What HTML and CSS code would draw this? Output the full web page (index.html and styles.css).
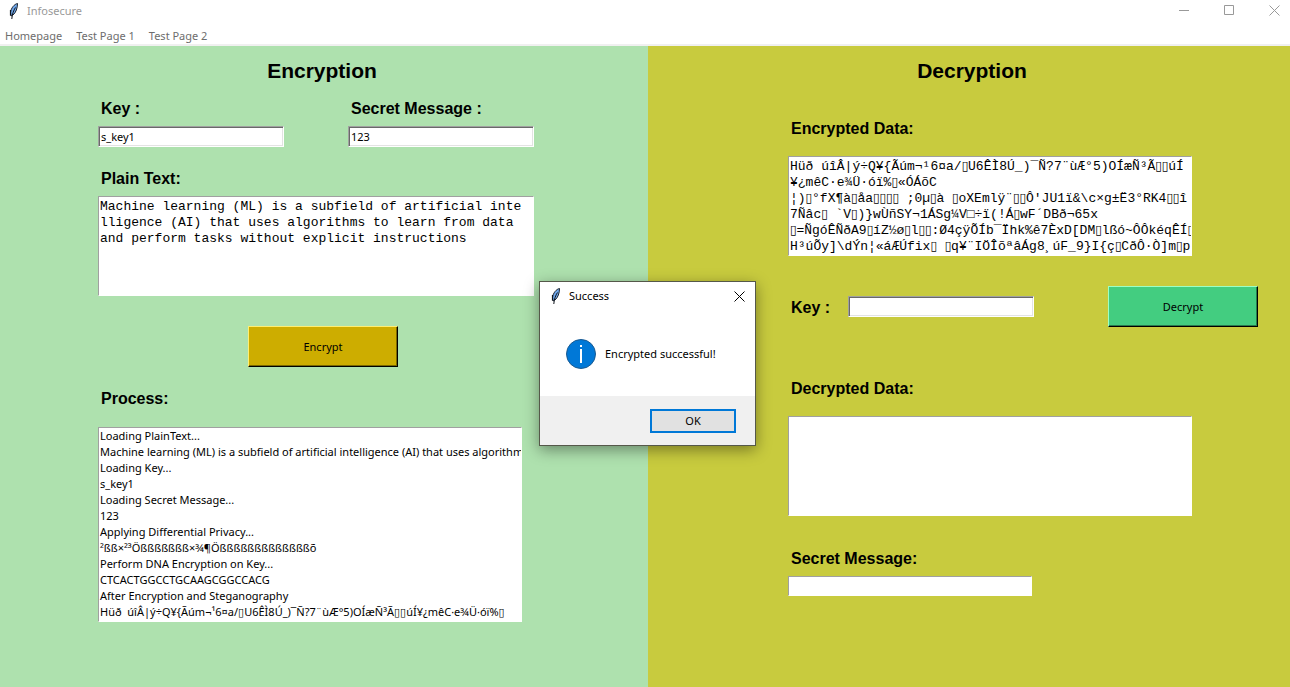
FILE: index.html
```
<!DOCTYPE html>
<html lang="en">
<head>
<meta charset="utf-8">
<title>Infosecure</title>
<link rel="stylesheet" href="styles.css">
</head>
<body>
<svg class="defs" aria-hidden="true">
  <symbol id="feather" viewBox="0 0 12 18">
    <path d="M9.500 1.500C6.500 2 3 6 2.500 10.500L3 14L5 13C8 10.500 9.500 6 9.500 1.500Z" fill="#6ea6ea" stroke="#1b222c" stroke-width="1"/>
    <path d="M7.500 5.500C5.500 8.500 4.200 12 3.800 17" fill="none" stroke="#10151c" stroke-width="1"/>
    <path d="M2.500 8V13.500" stroke="#10151c" stroke-width="1.200"/>
  </symbol>
</svg>
<div class="window">
  <header class="titlebar">
    <svg class="feather"><use href="#feather"/></svg>
    <span class="window-title">Infosecure</span>
    <div class="window-controls">
      <button type="button" aria-label="Minimize"><svg viewBox="0 0 11 11"><path d="M0 5.500H10"/></svg></button>
      <button type="button" aria-label="Maximize"><svg viewBox="0 0 11 11"><path d="M.5 .5H9.500V9.500H.5Z"/></svg></button>
      <button type="button" aria-label="Close"><svg viewBox="0 0 11 11"><path d="M.5 .5L10.500 10.500M10.500 .5L.5 10.500"/></svg></button>
    </div>
  </header>
  <nav class="menu">
    <a href="#home">Homepage</a>
    <a href="#page1">Test Page 1</a>
    <a href="#page2">Test Page 2</a>
  </nav>
  <main class="panels">
    <section class="panel encryption">
      <h1>Encryption</h1>
      <div class="pair">
        <div class="field">
          <label for="enc-key">Key :</label>
          <input id="enc-key" class="entry" type="text" value="s_key1">
        </div>
        <div class="field">
          <label for="enc-secret">Secret Message :</label>
          <input id="enc-secret" class="entry" type="text" value="123">
        </div>
      </div>
      <div class="field plain">
        <label for="plain">Plain Text:</label>
        <textarea id="plain" class="text" spellcheck="false">Machine learning (ML) is a subfield of artificial inte
lligence (AI) that uses algorithms to learn from data
and perform tasks without explicit instructions</textarea>
      </div>
      <button type="button" class="action encrypt">Encrypt</button>
      <div class="field process">
        <label for="process">Process:</label>
        <select id="process" class="listbox" size="12">
          <option>Loading PlainText...</option>
          <option>Machine learning (ML) is a subfield of artificial intelligence (AI) that uses algorithms to learn from data and perform tasks</option>
          <option>Loading Key...</option>
          <option>s_key1</option>
          <option>Loading Secret Message...</option>
          <option>123</option>
          <option>Applying Differential Privacy...</option>
          <option>²ßß×²³Ößßßßßßß×¾¶Ößßßßßßßßßßßßßõ</option>
          <option>Perform DNA Encryption on Key...</option>
          <option>CTCACTGGCCTGCAAGCGGCCACG</option>
          <option>After Encryption and Steganography</option>
          <option>Hüð&nbsp; úîÂ|ý÷Q¥{Ãúm¬¹6¤a/▯U6ÊÌ8Ú_)¯Ñ?7¨ùÆ°5)OÍæÑ³Ã▯▯úÍ¥¿mêC·e¾Ü·óï%▯</option>
        </select>
      </div>
    </section>
    <section class="panel decryption">
      <h1>Decryption</h1>
      <div class="field data">
        <label for="encrypted">Encrypted Data:</label>
        <textarea id="encrypted" class="text" wrap="off" spellcheck="false">Hüð úîÂ|ý÷Q¥{Ãúm¬¹6¤a/▯U6ÊÌ8Ú_)¯Ñ?7¨ùÆ°5)OÍæÑ³Ã▯▯úÍ
¥¿mêC·e¾Ü·óï%▯«ÓÁõC
¦)▯°fX¶à▯åa▯▯▯▯ ;0µ▯à ▯oXEmlÿ¨▯▯Ô'JU1ï&amp;\c×g±Ë3°RK4▯▯î Ýú
7Ñâc▯ `V▯)}wÙñSY¬1ÁSg¼V□÷ï(!Á▯wF´DBð¬65x
▯=ÑgóÊÑðA9▯íZ½ø▯l▯▯:Ø4çÿÕÍb¯Ïhk%ê7ÈxD[DM▯lßó~ÔÔkéqÊÍ▯
H³úÕy]\dÝn¦«áÆÚfix▯ ▯q¥¨IÖÎõªâÁg8¸úF_9}I{ç▯CðÔ·Ò]m▯p</textarea>
      </div>
      <div class="key-row">
        <label for="dec-key">Key :</label>
        <input id="dec-key" class="entry" type="text">
        <button type="button" class="action decrypt">Decrypt</button>
      </div>
      <div class="field data">
        <label for="decrypted">Decrypted Data:</label>
        <textarea id="decrypted" class="text" spellcheck="false"></textarea>
      </div>
      <div class="field secret">
        <label for="dec-secret">Secret Message:</label>
        <input id="dec-secret" class="entry thin" type="text">
      </div>
    </section>
  </main>
  <dialog class="message" open aria-labelledby="message-title">
    <header class="message-bar">
      <svg class="feather"><use href="#feather"/></svg>
      <span id="message-title">Success</span>
      <button type="button" aria-label="Close"><svg viewBox="0 0 11 11"><path d="M.5 .5L10.500 10.500M10.500 .5L.5 10.500"/></svg></button>
    </header>
    <div class="message-body">
      <svg class="info" viewBox="0 0 30 30">
        <circle cx="15" cy="15" r="14.500" fill="#0078d7" stroke="#1b5a90"/>
        <path d="M15 10V24M15 6V8" stroke="#fff" stroke-width="2"/>
      </svg>
      <span>Encrypted successful!</span>
    </div>
    <footer class="message-footer"><button type="button" class="ok">OK</button></footer>
  </dialog>
</div>
</body>
</html>
```

FILE: styles.css
```
* { box-sizing: border-box; }

body {
  margin: 0;
  background: #fff;
  color: #000;
  font: 11px/16px "Segoe UI", "Noto Sans", "DejaVu Sans", sans-serif;
}

button, input, select, textarea { font: inherit; color: inherit; border-radius: 0; margin: 0; }
button { padding: 0; }
.defs { position: absolute; width: 0; height: 0; }

.window { position: relative; display: flex; flex-direction: column; min-height: 100vh; }

.titlebar { display: flex; align-items: center; height: 21px; padding-left: 8px; color: #999; }
.feather { width: 12px; height: 18px; }
.window-title { margin-left: 7px; }
.window-controls { display: flex; gap: 34px; margin-left: auto; padding-right: 10px; }
.window-controls button, .message-bar button { width: 11px; height: 11px; border: 0; background: none; }
.window-controls svg, .message-bar button svg { display: block; width: 11px; height: 11px; fill: none; stroke: #999; }
.message-bar button svg { stroke: #000; }

.menu { display: flex; gap: 14px; height: 25px; padding: 7px 5px 0; border-bottom: 2px solid #f0f0f0; }
.menu a { color: #6d6d6d; text-decoration: none; line-height: 16px; }

.panels { display: grid; flex: 1; grid-template-columns: minmax(0, 648fr) minmax(0, 642fr); }
.panel { min-width: 0; padding-top: 13px; }
.encryption { padding-left: 98px; padding-right: 114px; background: #aee1ae; }
.decryption { padding-left: 140px; padding-right: 32px; background: #c8cb3e; }

h1 { margin: 0; font: bold 21px/24px "Liberation Sans", Arial, sans-serif; text-align: center; }
.encryption h1 { padding-left: 12px; }
.decryption h1 { padding-right: 102px; }

label { padding-left: 3px; font: bold 16px/20px "Liberation Sans", Arial, sans-serif; }
.field { display: flex; flex-direction: column; gap: 7px; }

.pair { display: flex; justify-content: space-between; margin-top: 16px; }
.entry {
  width: 186px;
  height: 21px;
  padding: 0 2px;
  background: #fff;
  border: 1px solid;
  border-color: #a0a0a0 #fff #fff #a0a0a0;
  box-shadow: inset 1px 1px #696969, inset -1px -1px #e3e3e3;
  outline: 0;
}
.entry.thin { width: 244px; height: 20px; box-shadow: none; }

.text {
  display: block;
  width: 100%;
  height: 100px;
  padding: 2px 1px 0;
  overflow: hidden;
  resize: none;
  background: #fff;
  border: 1px solid;
  border-color: #a0a0a0 #fff #fff #a0a0a0;
  outline: 0;
  font: 13px/16px "Liberation Mono", "DejaVu Sans Condensed", monospace;
  white-space: pre;
}
.plain { margin-top: 22px; }

.action {
  width: 150px;
  height: 41px;
  border: 1px solid;
}
.encrypt {
  display: block;
  margin: 30px auto 22px 150px;
  background: #cdad00;
  border-color: #ffee70 #000 #000 #ffee70;
  box-shadow: inset -1px -1px #7b6800;
}
.decrypt {
  margin-left: auto;
  background: #43cd80;
  border-color: #9dffc4 #000 #000 #9dffc4;
  box-shadow: inset -1px -1px #287b4d;
}

.process { gap: 18px; padding-right: 12px; }
.listbox {
  width: 100%;
  height: 195px;
  padding: 0;
  overflow: hidden;
  background: #fff;
  border: 1px solid;
  border-color: #a0a0a0 #fff #fff #a0a0a0;
  outline: 0;
}
.listbox option { min-height: 16px; padding: 0 1px; line-height: 16px; white-space: pre; }

.data { gap: 17px; margin-top: 36px; padding-right: 66px; }
.key-row { display: flex; align-items: center; margin-top: 30px; }
.key-row label { width: 60px; padding-top: 2px; }
.key-row + .data { margin-top: 52px; }
.secret { margin-top: 33px; }

.message {
  position: absolute;
  top: 281px;
  left: 539px;
  width: 217px;
  margin: 0;
  padding: 0;
  color: #000;
  background: #fff;
  border: 1px solid #55584a;
  box-shadow: 0 4px 14px rgba(0, 0, 0, 0.4);
}
.message-bar { display: flex; align-items: center; height: 28px; padding: 0 10px; }
.message-bar span { margin-left: 7px; }
.message-bar button { margin-left: auto; }
.message-body { display: flex; align-items: center; gap: 9px; height: 86px; padding: 2px 0 0 26px; }
.info { width: 30px; height: 30px; }
.message-footer { display: flex; justify-content: flex-end; padding: 13px 19px 12px; background: #f0f0f0; }
.ok { width: 86px; height: 24px; background: #e1e1e1; border: 2px solid #0078d7; }
```
